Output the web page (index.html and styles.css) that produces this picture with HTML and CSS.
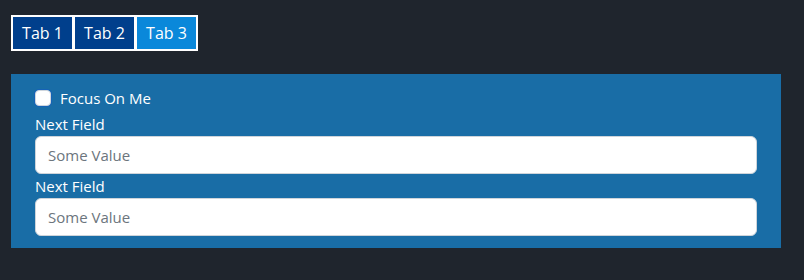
FILE: index.html
```html
<!DOCTYPE html>
<html lang="en">
<head>
  <meta charset="UTF-8" />
  <meta name="viewport" content="width=device-width, initial-scale=1.0"/>
  <title>Tabs</title>
  <link rel="stylesheet" href="styles.css">
</head>
<body>
  <div class="tabs">
    <button class="tab">Tab 1</button>
    <button class="tab">Tab 2</button>
    <button class="tab active">Tab 3</button>
  </div>

  <div class="panel">
    <div class="check-row">
      <input type="checkbox" id="focus" class="check">
      <label for="focus">Focus On Me</label>
    </div>
    <label class="field-label">Next Field</label>
    <input type="text" class="field" placeholder="Some Value">
    <label class="field-label">Next Field</label>
    <input type="text" class="field" placeholder="Some Value">
  </div>
</body>
</html>
```

FILE: styles.css
```css
body {
  margin: 0;
  padding: 15px 23px 0 11px;
  background-color: #1f252d;
  font-family: "Open Sans", "Noto Sans", sans-serif;
  font-size: 15px;
  color: #fff;
}
.tabs {
  display: inline-flex;
  gap: 3px;
  padding: 2px;
  background: #fff;
}
.tab {
  width: 59px;
  height: 32px;
  padding: 0;
  border: none;
  background: #003f8c;
  color: #fff;
  font-family: inherit;
  font-size: 16px;
  cursor: pointer;
}
.tab.active { background: #0a88da; }
.panel {
  margin-top: 23px;
  padding: 12px 24px;
  background: #196da6;
}
.check-row {
  display: flex;
  align-items: center;
  gap: 9px;
  height: 24px;
  margin-bottom: 2px;
}
.check {
  appearance: none;
  width: 16px;
  height: 16px;
  margin: 0;
  background: #fff;
  border: 1px solid #cfd6dd;
  border-radius: 4px;
  box-shadow: 0 0 0 1px rgba(20, 90, 200, 0.5);
}
.field-label {
  display: block;
  line-height: 24px;
}
.field {
  display: block;
  box-sizing: border-box;
  width: 100%;
  height: 38px;
  padding: 6px 12px;
  border: 1px solid #ced4da;
  border-radius: 6px;
  background: #fff;
  font-family: inherit;
  font-size: 15px;
  color: #212529;
}
.field::placeholder { color: #6c757d; }
```
